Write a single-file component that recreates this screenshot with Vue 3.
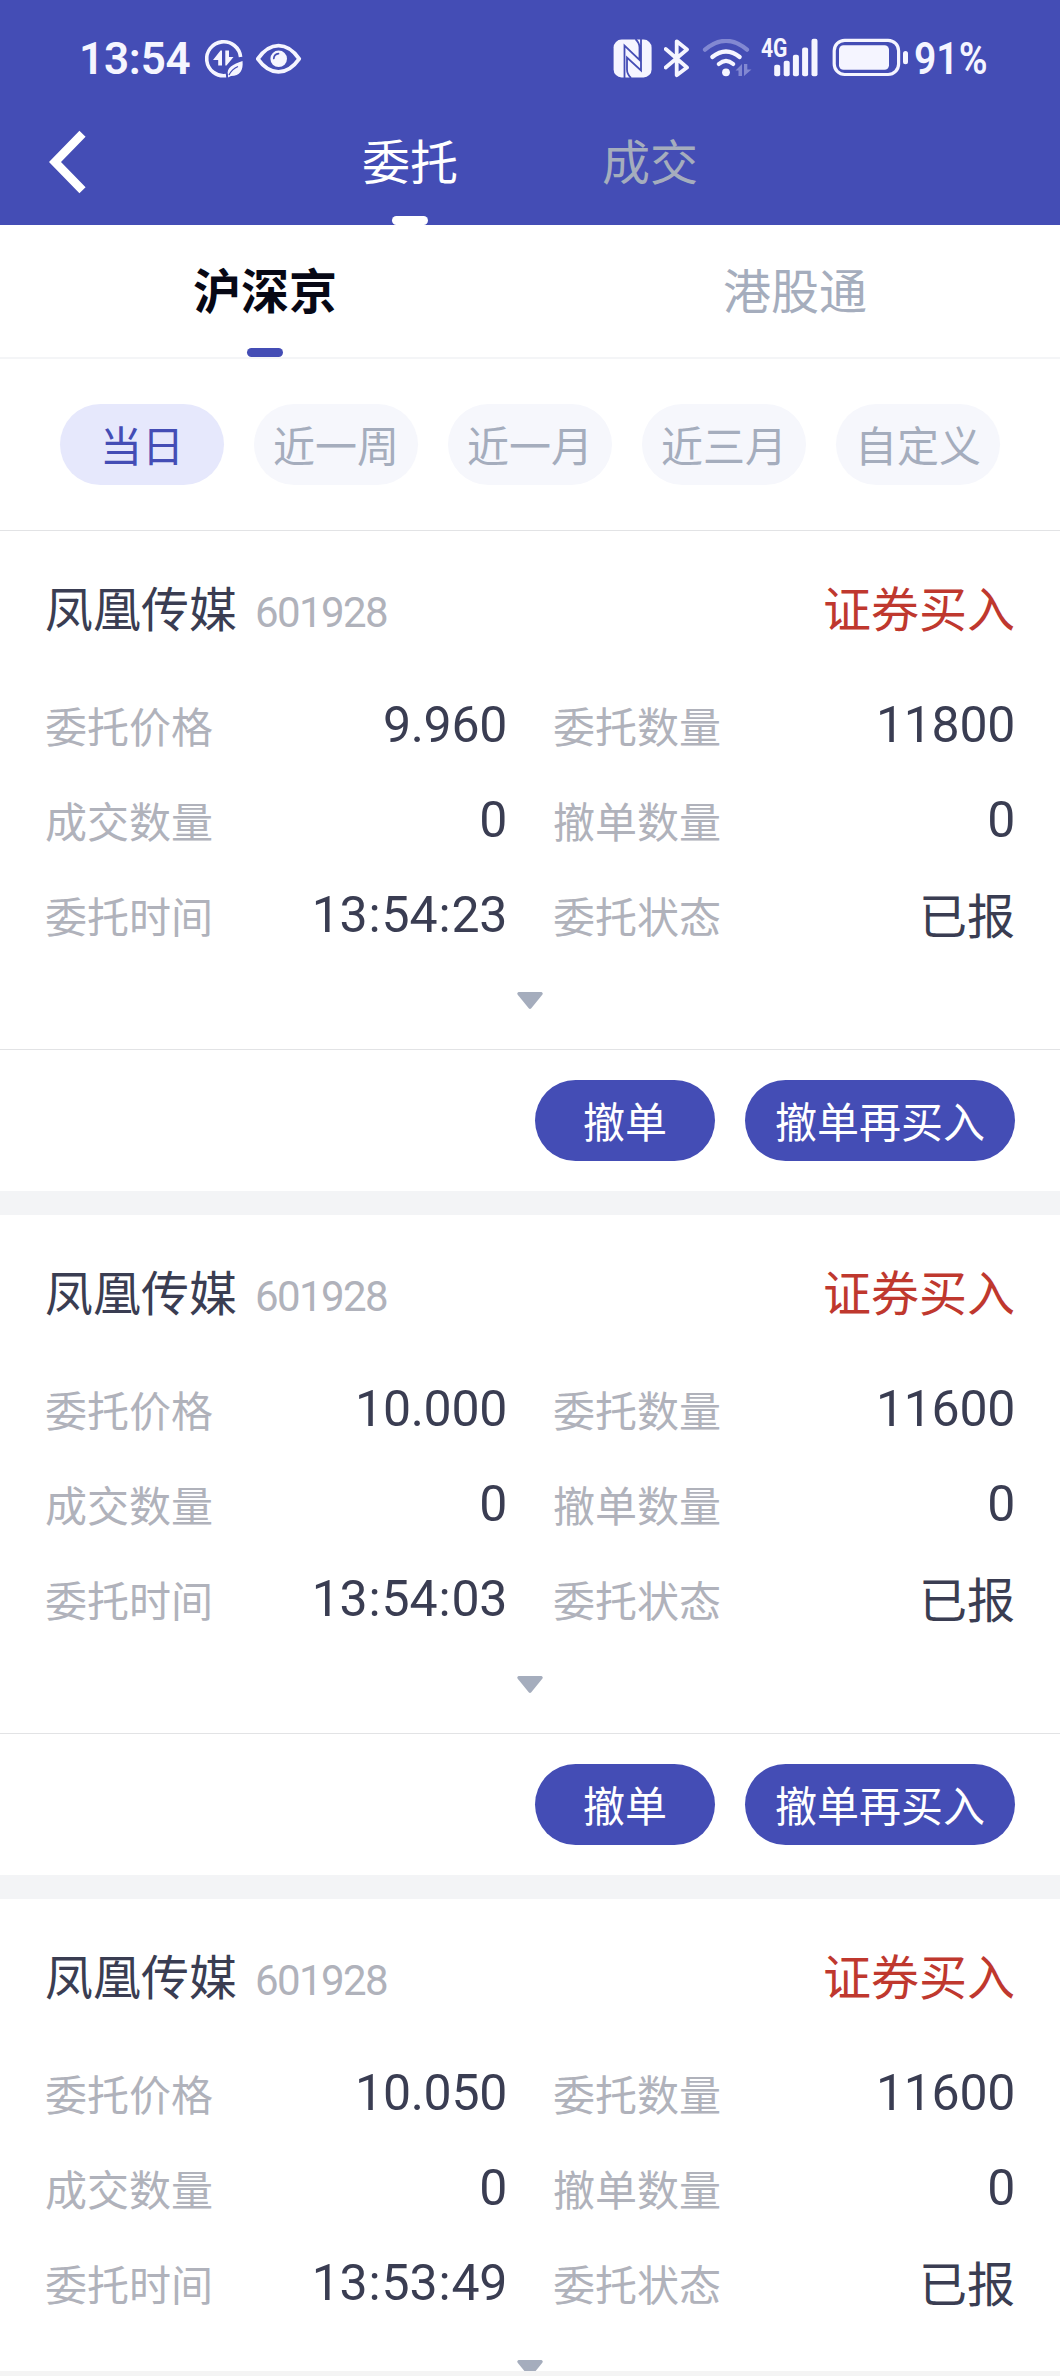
<script setup>
const periods = ['当日', '近一周', '近一月', '近三月', '自定义']

const orders = [
  { price: '9.960', qty: '11800', time: '13:54:23', actions: true },
  { price: '10.000', qty: '11600', time: '13:54:03', actions: true },
  { price: '10.050', qty: '11600', time: '13:53:49', actions: false },
].map((o) => ({
  time: o.time,
  actions: o.actions,
  fields: [
    { label: '委托价格', value: o.price },
    { label: '委托数量', value: o.qty },
    { label: '成交数量', value: '0' },
    { label: '撤单数量', value: '0' },
    { label: '委托时间', value: o.time, clock: true },
    { label: '委托状态', value: '已报', text: true },
  ],
}))
</script>

<template>
  <div class="screen">
    <header class="top">
      <div class="status">
        <span class="clock">13:54</span>
        <svg class="data" width="40" height="40" viewBox="204 39 40 40">
          <path d="M240.600 57A17 17 0 1 0 226 75.600" fill="none" stroke="#f5f5ff" stroke-width="3.600" />
          <path d="M213 60L220.500 50.500H222V65.500H218.200V60ZM225.300 50.500H229V57H233.500L226.500 65.500H225.300Z" fill="#f5f5ff" />
          <path d="M242.500 61C243.500 70 240 76 231 76L228 77.500L228 75C226 68 233 64 242.500 61Z" fill="#f5f5ff" />
          <path d="M229 75Q232 69 238 66.500" fill="none" stroke="#444db5" stroke-width="1.300" />
        </svg>
        <svg class="eye" width="46" height="40" viewBox="256 39 46 40">
          <path d="M257.800 58.800Q267 45.600 278.500 45.600T299.200 58.800Q290 71.800 278.500 71.800T257.800 58.800Z" fill="none" stroke="#f5f5ff" stroke-width="3.800" stroke-linejoin="round" />
          <circle cx="278.700" cy="58.800" r="8.300" fill="#f5f5ff" />
          <path d="M273.800 58.500Q274 54 278.500 53.600" fill="none" stroke="#444db5" stroke-width="1.700" stroke-linecap="round" />
        </svg>
        <svg class="nfc" width="39" height="40" viewBox="613 39 39 40">
          <rect x="613.600" y="39.600" width="38" height="37.800" rx="8" fill="#f5f5ff" />
          <path d="M624.500 78V45.500L639.500 60V47.500Q639.500 43 635.500 39M641 39V70.500L627 57.500V69.500Q627 74 631 78" fill="none" stroke="#444db5" stroke-width="1.800" />
        </svg>
        <svg class="bt" width="26" height="40" viewBox="664 39 26 40">
          <path d="M665.700 49L687 67.500L676.700 75.200V41.300L687 49.500L665.700 67.500" fill="none" stroke="#f5f5ff" stroke-width="3.800" stroke-linejoin="round" stroke-linecap="round" />
        </svg>
        <svg class="wifi" width="50" height="40" viewBox="702 39 50 40">
          <g fill="none" stroke="#f5f5ff" stroke-width="4.200" stroke-linecap="round">
            <path d="M705 49.700Q726 32 747 49.700" stroke="#8288d2" />
            <path d="M712.300 57Q726 46 739.700 57" />
            <path d="M718.800 64Q726 57.800 733.200 64" />
          </g>
          <circle cx="726" cy="72.300" r="3.900" fill="#f5f5ff" />
          <path d="M735.500 70.500L742 64V76H738.500V70.500ZM744 64H747.300V69.500H751.500L744 76Z" fill="#8288d2" />
        </svg>
        <svg class="signal" width="58" height="50" viewBox="761 28 58 50">
          <text x="761" y="56.800" textLength="26.500" lengthAdjust="spacingAndGlyphs" class="net">4G</text>
          <g fill="#f5f5ff">
            <rect x="774.200" y="64.800" width="6" height="11.400" rx="2" />
            <rect x="783.700" y="60.800" width="6" height="15.400" rx="2" />
            <rect x="792.900" y="54.800" width="6" height="21.400" rx="2" />
            <rect x="802.100" y="47.500" width="6" height="28.700" rx="2" />
            <rect x="811.500" y="38.700" width="6" height="37.500" rx="2" />
          </g>
        </svg>
        <svg class="battery" width="76" height="40" viewBox="832 38 76 40">
          <rect x="834.200" y="40.300" width="64.400" height="34.200" rx="10.500" fill="none" stroke="#f5f5ff" stroke-width="3.200" />
          <rect x="839" y="45.200" width="50" height="24.600" rx="4.500" fill="#f5f5ff" />
          <rect x="903" y="51" width="5" height="13.300" rx="2.500" fill="#f5f5ff" />
        </svg>
        <svg class="pct" width="78" height="60" viewBox="914 28 78 60">
          <text x="914" y="73.700" textLength="73.500" lengthAdjust="spacingAndGlyphs" class="pct-text">91%</text>
        </svg>
      </div>
      <nav class="nav">
        <svg class="back" width="38" height="64" viewBox="0 0 38 64">
          <path d="M33.500 3.700L6 32L33.500 60.300" fill="none" stroke="#fff" stroke-width="8.600" />
        </svg>
        <span class="nav-tab on">委托</span>
        <span class="nav-tab">成交</span>
      </nav>
    </header>

    <div class="markets">
      <span class="market on">沪深京</span>
      <span class="market">港股通</span>
    </div>

    <div class="periods">
      <span v-for="(p, i) in periods" :key="p" class="pill" :class="{ on: i === 0 }">{{ p }}</span>
    </div>

    <main class="list">
      <article v-for="o in orders" :key="o.time" class="card">
        <div class="head">
          <span class="name">凤凰传媒</span>
          <span class="code">601928</span>
          <span class="side">证券买入</span>
        </div>
        <div class="fields">
          <div v-for="f in o.fields" :key="f.label" class="field">
            <span class="label">{{ f.label }}</span>
            <span v-if="f.clock" class="value"><template v-for="(part, k) in f.value.split(':')" :key="k"><i v-if="k" class="colon">:</i>{{ part }}</template></span>
            <span v-else class="value" :class="{ text: f.text }">{{ f.value }}</span>
          </div>
        </div>
        <div class="expand">
          <svg width="26" height="17" viewBox="0 0 26 17">
            <path d="M1.500 0H24.500Q26.500 1 25.300 2.800L14.300 16.300Q13 17.600 11.700 16.300L0.700 2.800Q-0.500 1 1.500 0Z" fill="#a5adbd" />
          </svg>
        </div>
        <div v-if="o.actions" class="actions">
          <button class="btn">撤单</button>
          <button class="btn wide">撤单再买入</button>
        </div>
      </article>
    </main>
  </div>
</template>

<style>
body {
  background: #f4f4f4;
}
</style>

<style scoped>
.screen {
  width: 1060px;
  height: 2376px;
  display: flex;
  flex-direction: column;
  overflow: hidden;
  background: #f4f4f4;
  font-family: "Noto Sans CJK SC", sans-serif;
  font-size: 48px;
}
.top {
  height: 225px;
  flex: none;
  background: #444db5;
}
.status {
  height: 100px;
  padding-top: 38px;
  box-sizing: border-box;
  display: flex;
  align-items: flex-start;
  color: #f5f5ff;
}
.status svg {
  flex: none;
}
.clock {
  width: 125px;
  padding-left: 79px;
  font: 600 44px/42px Roboto, sans-serif;
  letter-spacing: -0.2px;
}
.data { margin-top: 1px; }
.eye { margin: 1px 0 0 12px; }
.nfc { margin: 1px 0 0 311px; }
.bt { margin: 1px 0 0 12px; }
.wifi { margin: 1px 0 0 12px; }
.signal { margin: -10px 0 0 9px; }
.battery { margin-left: 13px; }
.pct { margin: -10px 0 0 6px; }
.net {
  font: 700 25px Roboto, sans-serif;
  fill: #f5f5ff;
}
.pct-text {
  font: 600 44px Roboto, sans-serif;
  fill: #f5f5ff;
}
.nav {
  height: 125px;
  display: flex;
}
.back {
  margin: 30px 274px 0 49px;
}
.nav-tab,
.market {
  position: relative;
  color: #a5adbd;
  text-align: center;
}
.nav-tab {
  width: 98px;
  line-height: 119px;
  margin-right: 142px;
}
.nav-tab.on {
  color: #fff;
}
.nav-tab.on::after,
.market.on::after {
  content: "";
  position: absolute;
  left: calc(50% - 18px);
  bottom: 0;
  width: 36px;
  height: 9px;
  border-radius: 4.5px;
  background: #fff;
}
.markets {
  height: 132px;
  flex: none;
  display: flex;
  background: #fff;
  border-bottom: 2px solid #f4f5f7;
}
.market {
  flex: 1;
  line-height: 127px;
}
.market.on {
  color: #070815;
  font-weight: 700;
}
.market.on::after {
  background: #444db5;
}
.periods {
  height: 172px;
  flex: none;
  display: flex;
  gap: 30px;
  padding: 45px 60px 0;
  box-sizing: border-box;
  border-bottom: 1px solid #e2e3e5;
  background: #fff;
}
.pill {
  width: 164px;
  height: 81px;
  border-radius: 41px;
  background: #f6f7fc;
  color: #a5adbd;
  font-size: 42px;
  line-height: 79px;
  text-align: center;
}
.pill.on {
  background: #e6e8fc;
  color: #444db5;
}
.list {
  height: 1840px;
  overflow: hidden;
}
.card {
  height: 684px;
  box-sizing: border-box;
  border-bottom: 24px solid #f3f4f6;
  background: #fff;
}
.head {
  height: 60px;
  padding: 45px 45px 41px;
  display: flex;
  align-items: baseline;
  line-height: 60px;
  color: #3a3d52;
}
.code {
  margin-left: 18px;
  font-family: Roboto, sans-serif;
  font-size: 42px;
  letter-spacing: -1.600px;
  color: #b0b2bb;
}
.side {
  margin-left: auto;
  color: #bf382e;
}
.fields {
  display: grid;
  grid-template-columns: 1fr 1fr;
  column-gap: 46px;
  padding: 0 45px;
}
.field {
  height: 95px;
  display: flex;
  justify-content: space-between;
  line-height: 95px;
}
.label {
  font-size: 42px;
  color: #b0b2bb;
}
.value {
  font-family: Roboto, sans-serif;
  font-size: 50px;
  line-height: 97px;
  letter-spacing: -0.3px;
  color: #3a3d52;
}
.value.text {
  font-family: "Noto Sans CJK SC", sans-serif;
  font-size: 48px;
  line-height: 92px;
  letter-spacing: 0;
}
.colon {
  font-style: normal;
  padding: 0 1.2px;
}
.expand {
  height: 87px;
  padding-top: 30px;
  box-sizing: border-box;
  display: flex;
  justify-content: center;
}
.actions {
  border-top: 1px solid #e2e3e5;
  display: flex;
  justify-content: flex-end;
  gap: 30px;
  padding: 30px 45px 0;
}
.btn {
  width: 180px;
  height: 81px;
  padding: 0 0 2px;
  border: 0;
  border-radius: 41px;
  background: #444db5;
  color: #fff;
  font: 42px/77px "Noto Sans CJK SC", sans-serif;
}
.btn.wide {
  width: 270px;
}
</style>
